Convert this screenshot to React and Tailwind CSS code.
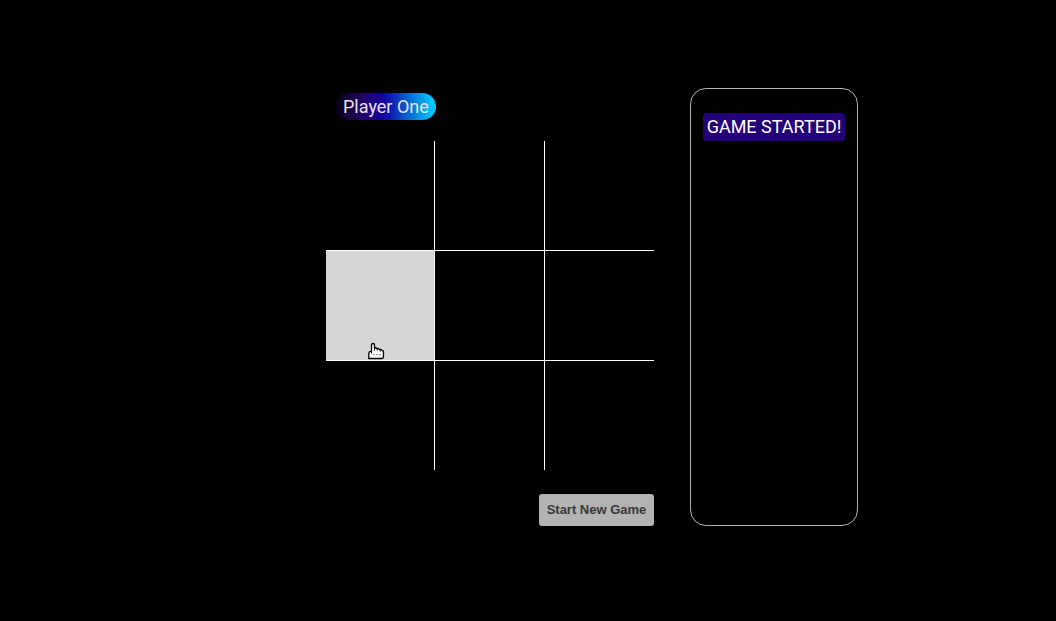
import React, { useState } from "react";

const CELLS = ["", "", "", "", "", "", "", "", ""];

function PointerHand() {
  return (
    <svg
      className="pointer-events-none absolute bottom-0 left-[42px]"
      width="17"
      height="18"
      viewBox="0 0 17 18"
      aria-hidden="true"
    >
      <path
        d="M3.5 9.5V3Q3.5 1.5 5 1.5T6.5 3V6Q7.5 5.3 9 6.5Q10.5 6 11.5 7.5Q13 7 14 8.5Q15.5 8.5 15.5 10V14.5Q15.5 16.5 14 16.5H.8V11.5Q.8 9 3.5 9.5Z"
        fill="white"
        stroke="black"
        strokeWidth="1.3"
        strokeLinejoin="round"
      />
      <path d="M3.5 9V11.5M6.5 6V8.5M9.3 6.5V8.5M12.2 7.5V9.5" stroke="black" fill="none" />
      <path d="M5 12.5H14" stroke="#999" strokeDasharray="2 1" fill="none" />
    </svg>
  );
}

export default function App() {
  const [active, setActive] = useState(3);

  return (
    <main className="min-h-screen bg-black px-4 pt-[88px] pb-10 font-['Roboto',sans-serif] text-lg text-white">
      <div className="mx-auto flex max-w-[660px] justify-end gap-9">
        <section className="flex w-[328px] flex-col">
          <div className="mt-[5px] ml-[9px] self-start rounded-full bg-[linear-gradient(90deg,#080010_0%,#25006e_30%,#1000a0_48%,#00c6ff_96%)] pr-[7px] pl-2 leading-[27px] text-[#e8e0ea]">
            Player One
          </div>
          <div className="mt-[21px] grid grid-cols-[108fr_109fr_109fr] gap-px bg-white">
            {CELLS.map((mark, i) => (
              <button
                key={i}
                type="button"
                aria-label={`Square ${i + 1}`}
                onMouseEnter={() => setActive(i)}
                className={
                  i === active
                    ? "relative h-[109px] bg-[#d7d5d6]"
                    : "relative h-[109px] bg-black"
                }
              >
                {mark}
                {i === active && <PointerHand />}
              </button>
            ))}
          </div>
          <button
            type="button"
            className="mt-6 h-8 min-w-[115px] self-end rounded-[3px] bg-[#b3b3b3] px-1.5 font-['Liberation_Sans',sans-serif] text-[13px] font-bold text-[#383838]"
          >
            Start New Game
          </button>
        </section>
        <aside className="w-[168px] rounded-2xl border border-[#b3b3b3] px-3 pt-6">
          <p className="rounded bg-[#240078] text-center leading-7 whitespace-nowrap">GAME STARTED!</p>
        </aside>
      </div>
    </main>
  );
}
